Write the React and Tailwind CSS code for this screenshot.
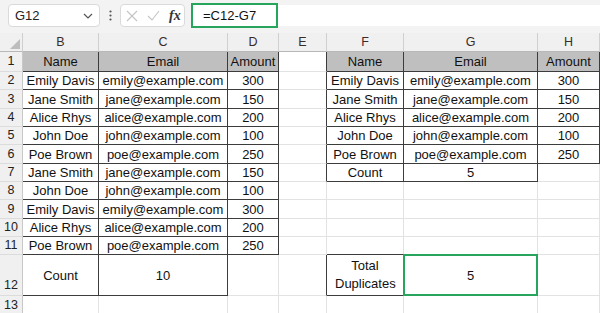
import React from 'react';

const COLS = ['B', 'C', 'D', 'E', 'F', 'G', 'H'];

// cell contents, keyed by row number then column letter
const data = {
  1: { B: 'Name', C: 'Email', D: 'Amount', F: 'Name', G: 'Email', H: 'Amount' },
  2: { B: 'Emily Davis', C: 'emily@example.com', D: '300', F: 'Emily Davis', G: 'emily@example.com', H: '300' },
  3: { B: 'Jane Smith', C: 'jane@example.com', D: '150', F: 'Jane Smith', G: 'jane@example.com', H: '150' },
  4: { B: 'Alice Rhys', C: 'alice@example.com', D: '200', F: 'Alice Rhys', G: 'alice@example.com', H: '200' },
  5: { B: 'John Doe', C: 'john@example.com', D: '100', F: 'John Doe', G: 'john@example.com', H: '100' },
  6: { B: 'Poe Brown', C: 'poe@example.com', D: '250', F: 'Poe Brown', G: 'poe@example.com', H: '250' },
  7: { B: 'Jane Smith', C: 'jane@example.com', D: '150', F: 'Count', G: '5' },
  8: { B: 'John Doe', C: 'john@example.com', D: '100' },
  9: { B: 'Emily Davis', C: 'emily@example.com', D: '300' },
  10: { B: 'Alice Rhys', C: 'alice@example.com', D: '200' },
  11: { B: 'Poe Brown', C: 'poe@example.com', D: '250' },
  12: { B: 'Count', C: '10', F: 'Total Duplicates', G: '5' },
  13: {},
};

const ROWS = [1, 2, 3, 4, 5, 6, 7, 8, 9, 10, 11, 12, 13];

function isBordered(r, c) {
  const ci = COLS.indexOf(c);
  if (ci < 0) return false;
  if (r >= 1 && r <= 11 && ['B', 'C', 'D'].includes(c)) return true;
  if (r === 12 && ['B', 'C'].includes(c)) return true;
  if (r >= 1 && r <= 6 && ['F', 'G', 'H'].includes(c)) return true;
  if (r === 7 && ['F', 'G'].includes(c)) return true;
  if (r === 12 && ['F', 'G'].includes(c)) return true;
  return false;
}

const rowHeight = (r) => {
  if (r === 1) return 'h-[20px]';
  if (r === 12) return 'h-[41px]';
  if (r === 13) return 'h-[18px]';
  return 'h-[18.35px]';
};

function Cell({ r, c }) {
  const ci = COLS.indexOf(c);
  const right = COLS[ci + 1];
  const darkRight = isBordered(r, c) || (right && isBordered(r, right));
  const darkBottom = isBordered(r, c) || isBordered(r + 1, c);
  const header = r === 1 && isBordered(r, c);
  const selected = r === 12 && c === 'G';
  const text = data[r][c];

  return (
    <div
      className={
        'relative flex items-center justify-center border-r border-b px-0.5 text-center leading-[15px] ' +
        (darkRight ? 'border-r-[#3c3c3c] ' : 'border-r-[#e2e2e2] ') +
        (darkBottom ? 'border-b-[#3c3c3c] ' : 'border-b-[#e2e2e2] ') +
        (header ? 'bg-[#bfbfbf]' : 'bg-white')
      }
    >
      {text && (
        <span className={r === 12 && c === 'F' ? 'w-[60px] leading-[18px]' : 'whitespace-nowrap'}>{text}</span>
      )}
      {selected && <div className="absolute -left-px -top-px -right-px -bottom-px border-2 border-[#27a55d]" />}
    </div>
  );
}

function TopBar() {
  return (
    <div className="flex h-[33px] items-start bg-[#f3f3f3] pt-[4px]">
      <div className="ml-[8px] flex h-[23px] w-[92px] items-center justify-between rounded-[4px] border border-[#dadada] bg-white pl-[6px] pr-[6px] text-[13px] text-[#222]">
        <span>G12</span>
        <svg width="10" height="6" viewBox="0 0 10 6" fill="none">
          <path d="M1 1l4 4 4-4" stroke="#555" strokeWidth="1.2" />
        </svg>
      </div>
      <div className="flex h-[23px] w-[20px] items-center justify-center">
        <svg width="3" height="11" viewBox="0 0 3 11">
          <circle cx="1.5" cy="1.5" r="1.1" fill="#555" />
          <circle cx="1.5" cy="5.5" r="1.1" fill="#555" />
          <circle cx="1.5" cy="9.5" r="1.1" fill="#555" />
        </svg>
      </div>
      <div className="flex h-[23px] w-[65px] items-center gap-[9px] rounded-[4px] border border-[#dadada] bg-white pl-[5px]">
        <svg width="12" height="12" viewBox="0 0 12 12" fill="none">
          <path d="M1 1l10 10M11 1L1 11" stroke="#c4c4c4" strokeWidth="1.1" />
        </svg>
        <svg width="13" height="11" viewBox="0 0 13 11" fill="none">
          <path d="M1 6l4 4 7-9" stroke="#c4c4c4" strokeWidth="1.1" />
        </svg>
        <span className="text-[14px] font-bold italic text-[#333]" style={{ fontFamily: '"Liberation Serif", serif' }}>
          fx
        </span>
      </div>
      <div className="ml-[6px] flex h-[25px] flex-1 -mt-[1px]">
        <div className="flex h-[25px] w-[87px] items-center border-2 border-[#27a55d] bg-white pl-[10px] text-[13px] text-[#111]">
          =C12-G7
        </div>
        <div className="mt-[2px] h-[21px] flex-1 bg-white" />
      </div>
    </div>
  );
}

export default function App() {
  return (
    <div
      className="h-[313px] w-[600px] overflow-hidden bg-white text-[13px] text-[#111]"
      style={{ fontFamily: '"Liberation Sans", Arial, sans-serif' }}
    >
      <TopBar />
      <div className="grid grid-cols-[23px_76px_129px_51px_48px_77px_134px_62px]">
        {/* column header row */}
        <div className="relative h-[19px] border-r border-b border-r-[#cfcfcf] border-b-[#b8b8b8] bg-[#f0f0f0]">
          <svg className="absolute right-[2px] bottom-[2px]" width="10" height="10" viewBox="0 0 10 10">
            <path d="M10 0L10 10L0 10Z" fill="#bdbdbd" />
          </svg>
        </div>
        {COLS.map((c) => (
          <div
            key={c}
            className="flex h-[19px] items-center justify-center border-r border-b border-r-[#d0d0d0] border-b-[#b8b8b8] bg-[#f0f0f0] text-[12.5px] text-[#3a2b2b]"
          >
            {c}
          </div>
        ))}

        {ROWS.map((r) => (
          <React.Fragment key={r}>
            <div
              className={
                'flex justify-center border-r border-b border-r-[#c8c8c8] border-b-[#dcdcdc] bg-[#f0f0f0] text-[12.5px] text-[#222] ' +
                rowHeight(r) +
                (r === 12 ? ' items-end pb-[1px]' : ' items-center')
              }
            >
              {r}
            </div>
            {COLS.map((c) => (
              <Cell key={c} r={r} c={c} />
            ))}
          </React.Fragment>
        ))}
      </div>
    </div>
  );
}
